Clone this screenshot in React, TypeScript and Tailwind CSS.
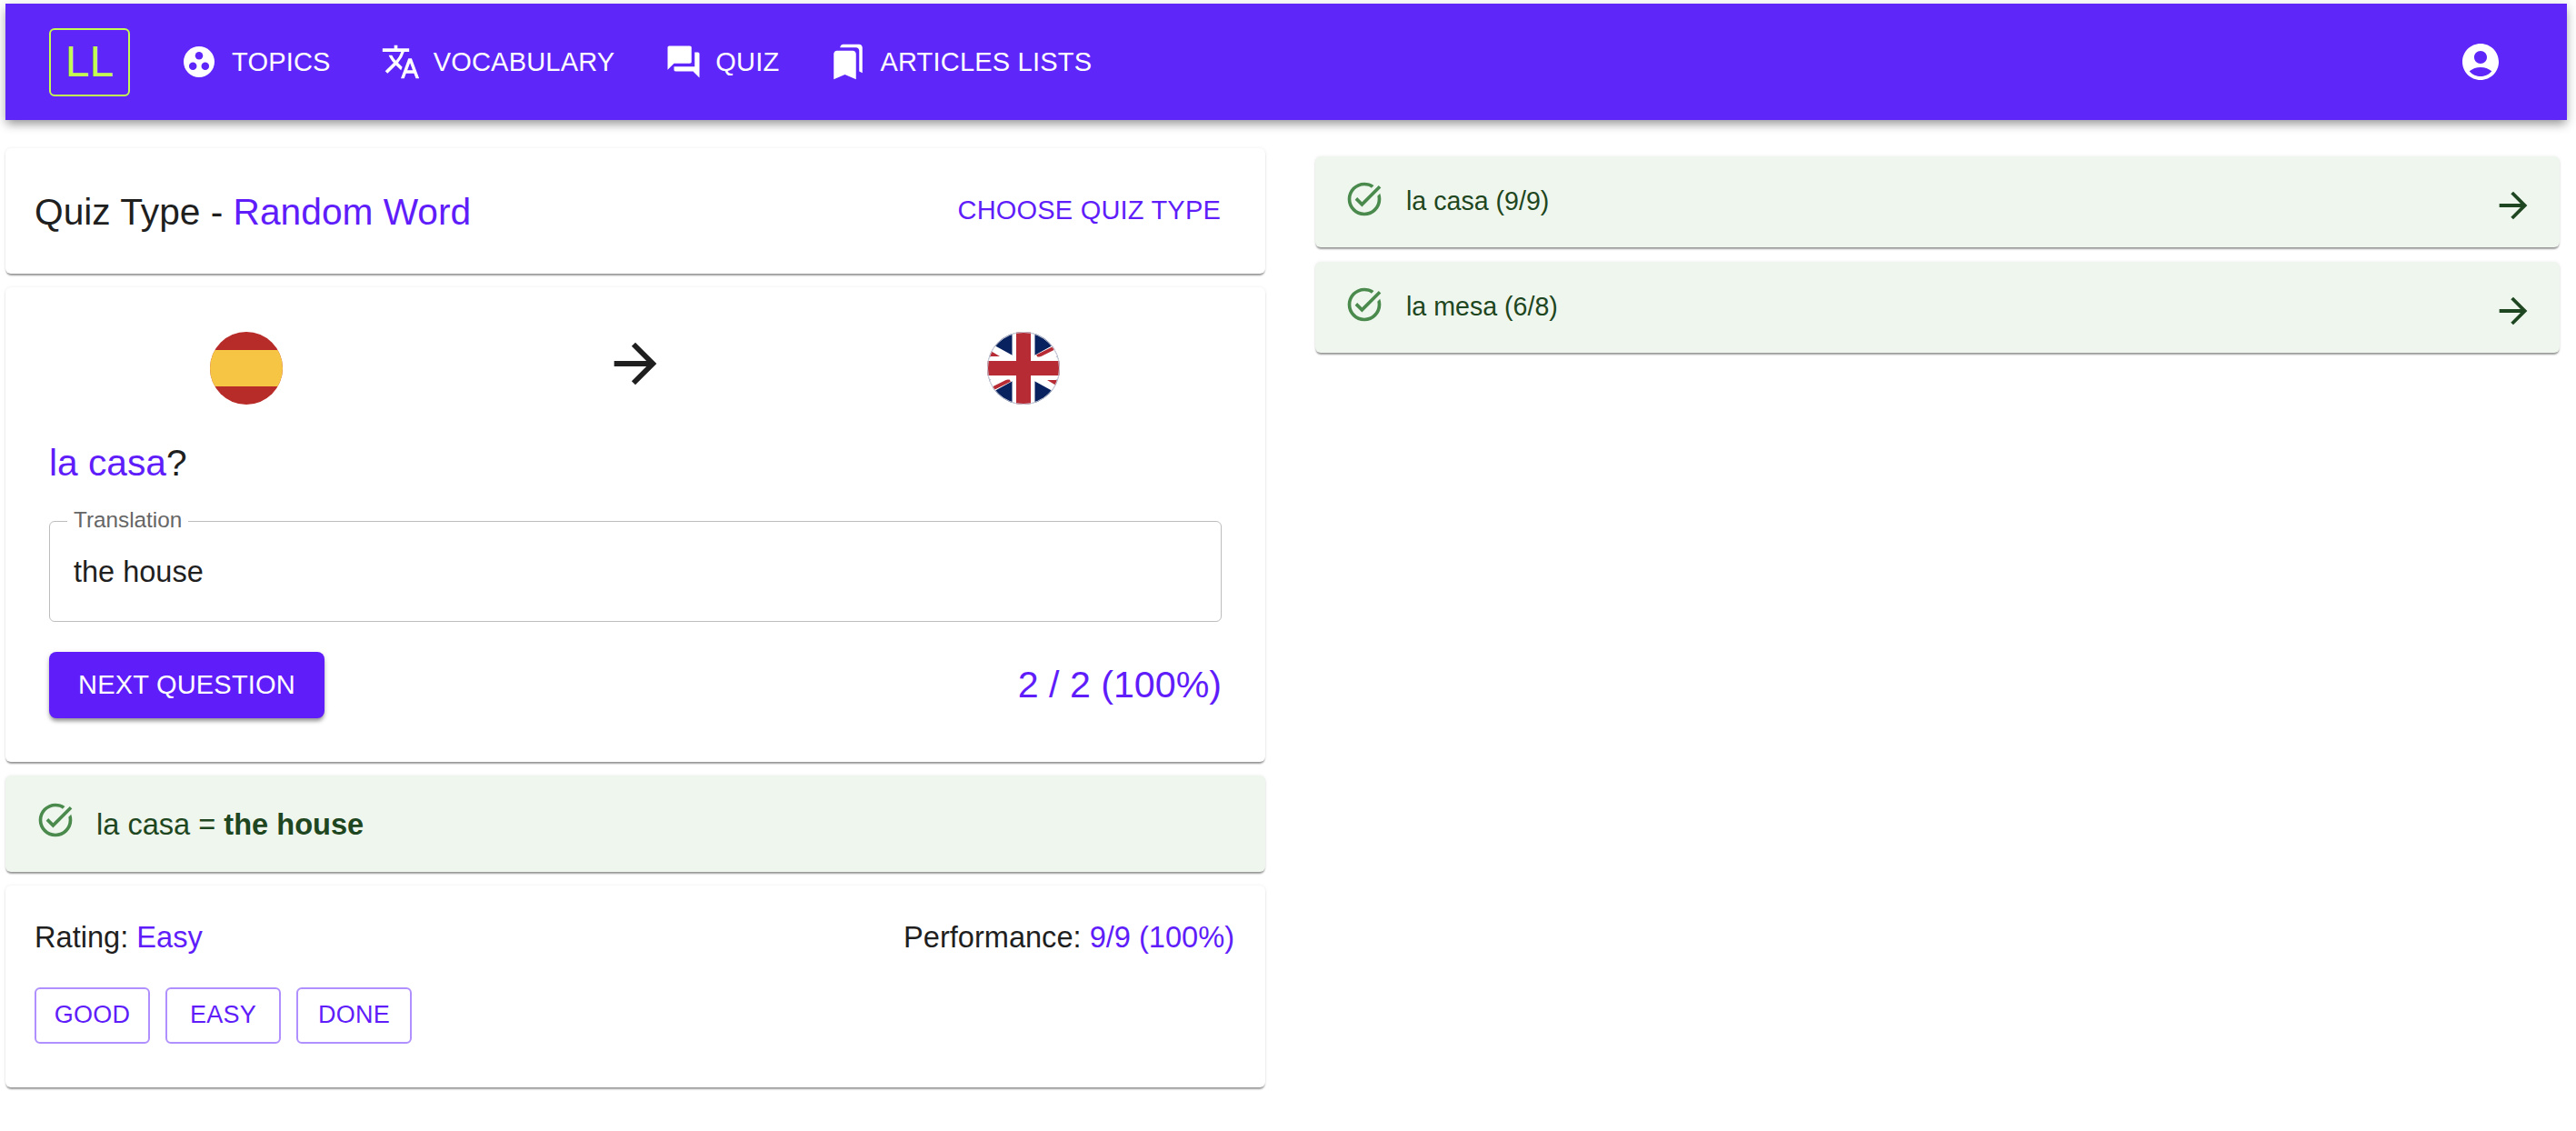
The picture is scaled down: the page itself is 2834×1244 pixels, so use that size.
import { MdAccountCircle, MdArrowForward, MdBookmarks, MdQuestionAnswer, MdTaskAlt, MdTranslate } from "react-icons/md"

const cardShadow = "shadow-[0_3px_2px_-1px_rgba(0,0,0,0.35),0_1px_2px_0_rgba(0,0,0,0.1),0_0_4px_0_rgba(0,0,0,0.06)]"

function NavItem({ icon, label, gap = "gap-[14px]" }: { icon: React.ReactNode; label: string; gap?: string }) {
  return (
    <div className={`flex items-center text-[29px] tracking-[0.2px] text-white ${gap}`}>
      {icon}
      <span className="mt-[2px]">{label}</span>
    </div>
  )
}

function TopicsIcon() {
  return (
    <svg width="34" height="34" viewBox="0 0 100 100">
      <circle cx="50" cy="50" r="50" fill="#fff" />
      <circle cx="50" cy="30" r="12.5" fill="#5f26f9" />
      <circle cx="30" cy="64" r="12.5" fill="#5f26f9" />
      <circle cx="70" cy="64" r="12.5" fill="#5f26f9" />
    </svg>
  )
}

function Header() {
  return (
    <header className="flex h-[128px] items-center justify-between bg-[#5f26f9] pl-[48px] pr-[71px] shadow-[0_6px_10px_-2px_rgba(0,0,0,0.35),0_2px_12px_2px_rgba(0,0,0,0.1)]">
      <div className="flex items-center gap-[59px]">
        <div className="flex h-[75px] w-[89px] items-center justify-center rounded-[6px] border-2 border-[#c4fb52] text-[48px] text-[#c4fb52]">
          LL
        </div>
        <nav className="flex items-center gap-[55px]">
          <NavItem icon={<TopicsIcon />} label="TOPICS" gap="gap-[19px]" />
          <NavItem icon={<MdTranslate size={44} />} label="VOCABULARY" />
          <NavItem icon={<MdQuestionAnswer size={42} />} label="QUIZ" />
          <NavItem icon={<MdBookmarks size={42} />} label="ARTICLES LISTS" />
        </nav>
      </div>
      <MdAccountCircle size={48} className="text-white" />
    </header>
  )
}

function SpainFlag() {
  return (
    <svg width="80" height="80" viewBox="0 0 80 80" className="translate-x-[2px]">
      <clipPath id="es">
        <circle cx="40" cy="40" r="40" />
      </clipPath>
      <g clipPath="url(#es)">
        <rect width="80" height="80" fill="#b72b28" />
        <rect y="20" width="80" height="40" fill="#f7c544" />
      </g>
    </svg>
  )
}

function UkFlag() {
  return (
    <svg width="80" height="80" viewBox="0 0 80 80" className="-translate-x-[3px]">
      <clipPath id="uk">
        <circle cx="40" cy="40" r="40" />
      </clipPath>
      <g clipPath="url(#uk)">
        <rect width="80" height="80" fill="#08215f" />
        <path d="M-40 -4L120 84M120 -4L-40 84" stroke="#fff" strokeWidth="13" />
        <path d="M3 27L14 27L4 21Z" fill="#b72b35" />
        <path d="M77 53L66 53L76 59Z" fill="#b72b35" />
        <path d="M55 27L75 17M25 53L5 63" stroke="#b72b35" strokeWidth="4" />
        <path d="M40 0V80M0 40H80" stroke="#fff" strokeWidth="25" />
        <path d="M40 0V80M0 40H80" stroke="#b72b35" strokeWidth="16" />
      </g>
      <circle cx="40" cy="40" r="39.5" fill="none" stroke="#c9ccd8" strokeWidth="1" />
    </svg>
  )
}

function QuizType() {
  return (
    <section className={`flex h-[138px] items-center justify-between rounded-[6px] bg-white pl-[32px] pr-[49px] ${cardShadow}`}>
      <h2 className="mt-[4px] text-[40.7px] text-[#1f1f1f]">
        Quiz Type - <span className="text-[#5f1ef9]">Random Word</span>
      </h2>
      <button className="text-[29px] tracking-[0.2px] text-[#5f1ef9]">CHOOSE QUIZ TYPE</button>
    </section>
  )
}

function Question() {
  return (
    <section className={`flex h-[522px] flex-col rounded-[6px] bg-white px-[48px] pt-[49px] ${cardShadow}`}>
      <div className="grid grid-cols-3 justify-items-center">
        <SpainFlag />
        <MdArrowForward size={70} className="text-[#1f1f1f]" />
        <UkFlag />
      </div>
      <p className="mt-[39px] text-[40.7px] leading-[50px] text-[#1f1f1f]">
        <span className="text-[#5f1ef9]">la casa</span>?
      </p>
      <div className="relative mt-[39px] flex h-[111px] items-center rounded-[6px] border-[1.5px] border-[#bdbdbd] px-[26px] pt-[2px] text-[32.5px] text-[#1f1f1f]">
        <span className="absolute -top-[16px] left-[19px] bg-white px-[7px] text-[24.3px] leading-[28px] text-[#666]">Translation</span>
        the house
      </div>
      <div className="mt-[33px] flex items-center justify-between">
        <button className="h-[73px] w-[303px] rounded-[8px] bg-[#5f1ef9] text-[29px] tracking-[0.2px] text-white shadow-[0_4px_4px_-1px_rgba(0,0,0,0.35),0_2px_6px_0_rgba(0,0,0,0.15)]">
          NEXT QUESTION
        </button>
        <span className="text-[41.2px] text-[#5f1ef9]">2 / 2 (100%)</span>
      </div>
    </section>
  )
}

function AnswerAlert() {
  return (
    <section className={`flex h-[106px] items-start rounded-[6px] bg-[#eff6ee] pl-[33px] pt-[27px] text-[32.6px] text-[#1e4620] ${cardShadow}`}>
      <MdTaskAlt size={44} className="mr-[23px] text-[#4b8a4d]" />
      <p className="mt-[8px] leading-[38px]">
        la casa = <b>the house</b>
      </p>
    </section>
  )
}

function Rating() {
  return (
    <section className={`flex h-[222px] flex-col rounded-[6px] bg-white pl-[32px] pr-[34px] pt-[37px] ${cardShadow}`}>
      <div className="flex justify-between text-[32.6px] leading-[40px] text-[#1f1f1f]">
        <p>
          Rating: <span className="text-[#5f1ef9]">Easy</span>
        </p>
        <p>
          Performance: <span className="text-[#5f1ef9]">9/9 (100%)</span>
        </p>
      </div>
      <div className="mt-[35px] flex gap-[17px]">
        {["GOOD", "EASY", "DONE"].map((label) => (
          <button
            key={label}
            className="h-[62px] w-[127px] rounded-[6px] border-2 border-[#b08fff] pb-[2px] text-[27px] tracking-[0.2px] text-[#5f1ef9]"
          >
            {label}
          </button>
        ))}
      </div>
    </section>
  )
}

function ResultRow({ label }: { label: string }) {
  return (
    <div className={`flex h-[100px] items-start justify-between rounded-[6px] bg-[#eff6ee] pl-[32px] pr-[28px] pt-[25px] text-[28.6px] text-[#1e4620] ${cardShadow}`}>
      <div className="flex items-start gap-[24px]">
        <MdTaskAlt size={44} className="text-[#4b8a4d]" />
        <span className="mt-[7px] leading-[34px]">{label}</span>
      </div>
      <MdArrowForward size={46} className="mt-[6px]" />
    </div>
  )
}

export default function App() {
  return (
    <div className="min-h-[1244px] bg-white pl-[6px] pr-[10px] pt-[4px] font-['Liberation_Sans',Arial,sans-serif]">
      <Header />
      <main className="flex items-start gap-[55px]">
        <div className="mt-[31px] flex w-[1386px] flex-col gap-[15px]">
          <QuizType />
          <Question />
          <AnswerAlert />
          <Rating />
        </div>
        <div className="mt-[40px] mr-[8px] flex flex-1 flex-col gap-[16px]">
          <ResultRow label="la casa (9/9)" />
          <ResultRow label="la mesa (6/8)" />
        </div>
      </main>
    </div>
  )
}
